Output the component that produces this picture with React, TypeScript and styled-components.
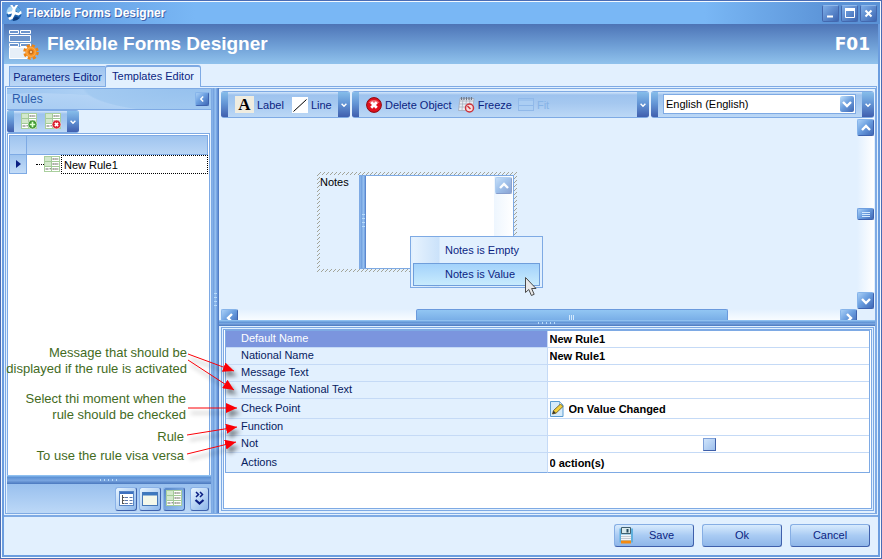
import React from "react";
import styled, { createGlobalStyle, css } from "styled-components";

const c = {
  bg: "#e2f0fe",
  line: "#7eaae4",
  soft: "#c5daf6",
  navy: "#0b1f82",
  ink: "#06205f",
  frame: "#4a6cb4",
  green: "#436b1e",
};

const glossy = "linear-gradient(135deg, #a9cff6 0%, #6b9fe0 45%, #3f68b6 100%)";
const barFill = "linear-gradient(#d3e6fb 0, #9ec3ee 3px, #a5c8f0 45%, #bcd8f6 100%)";
const capFill = "linear-gradient(#86bdea 0, #6496d6 45%, #405fae 100%)";
const splitH = "linear-gradient(#8fc0f0 0, #8fc0f0 1px, #5a90d4 2px, #79a5e0 60%, #4a78be 100%)";
const splitV = "linear-gradient(90deg, #8db8ec 0, #6c9cdc 2px, #a0c9f4 3px, #6f9edf 5px, #4a74be 100%)";

const GlobalStyle = createGlobalStyle`
  * { box-sizing: border-box; }
  body { margin: 0; background: ${c.bg}; }
  body, button, input, select, textarea {
    font-family: "Liberation Sans", Arial, sans-serif;
    font-size: 11px;
    color: ${c.navy};
  }
  button, input, select, textarea { margin: 0; padding: 0; border: 0; background: none; outline: none; border-radius: 0; }
  svg { display: block; flex: none; }
`;

const Frame = styled.div`
  display: flex;
  flex-direction: column;
  min-height: 100vh;
  border: 1px solid ${c.frame};
  box-shadow: inset 0 0 0 1px #f3f9ff;
  padding: 1px;
`;

const TitleBar = styled.header`
  display: flex;
  align-items: center;
  height: 22px;
  padding: 0 3px 0 4px;
  background: linear-gradient(90deg, #5c94da 0, #79b7f5 22%, #79b7f5 80%, #5a92d6 95%);
`;

const WindowTitle = styled.span`
  flex: 1;
  margin-left: 4px;
  font-size: 12px;
  font-weight: bold;
  color: #fff;
  text-shadow: 1px 1px 0 #3f62a8;
`;

const WindowButtons = styled.div`
  display: flex;
  gap: 2px;
`;

const WindowButton = styled.button`
  display: grid;
  place-items: center;
  width: 17px;
  height: 17px;
  border-radius: 2px;
  border: 1px solid #4468ae;
  border-top-color: #8fb8ea;
  background: linear-gradient(135deg, #7eaee8, #3c66b2);
`;

const Inner = styled.div`
  flex: 1;
  display: flex;
  flex-direction: column;
  border: solid #6b9ddf;
  border-width: 0 2px 2px;
  background: ${c.bg};
`;

const Banner = styled.div`
  display: flex;
  align-items: center;
  height: 40px;
  padding: 0 8px 0 4px;
  background: linear-gradient(#4d74b6, #6f9fd6 55%, #90c2ec);
  color: #fff;
`;

const BannerTitle = styled.h1`
  flex: 1;
  margin: 0 0 0 8px;
  font-size: 19px;
  font-weight: bold;
`;

const FormCode = styled.span`
  font: bold 17px "DejaVu Sans", Verdana, sans-serif;
`;

const Tabs = styled.div`
  display: flex;
  align-items: flex-end;
  height: 22px;
  padding-left: 5px;
`;

const Tab = styled.button<{ $active?: boolean }>`
  width: 96px;
  height: 20px;
  border: 1px solid ${c.line};
  border-right-width: 0;
  border-bottom: 0;
  white-space: nowrap;
  background: linear-gradient(#9dc3ef, #bcd7f6);
  ${(p) =>
    p.$active &&
    css`
      position: relative;
      z-index: 1;
      height: 22px;
      margin-bottom: -1px;
      padding-bottom: 2px;
      border-right-width: 1px;
      border-top-width: 2px;
      border-radius: 3px 3px 0 0;
      background: ${c.bg};
    `}
`;

const Workspace = styled.main`
  position: relative;
  flex: 1;
  display: flex;
  margin: 0 1px 1px;
  border: 1px solid ${c.line};
  padding: 1px 0 0 1px;
`;

const SidePanel = styled.section`
  display: flex;
  flex-direction: column;
  width: 205px;
  border: 1px solid ${c.line};
  border-width: 1px 1px 0 0;
`;

const SideHeader = styled.div`
  display: flex;
  align-items: center;
  justify-content: space-between;
  height: 21px;
  padding: 0 2px 0 5px;
  border-bottom: 1px solid ${c.line};
  background:
    radial-gradient(ellipse 110px 26px at 185px -2px, #96c1ee 0, #a3caf1 97%, transparent 100%),
    radial-gradient(ellipse 120px 20px at 30px 24px, #a6cbf2 0, #b3d3f5 97%, transparent 100%),
    linear-gradient(90deg, #9cc5f0, #c6e0fa);
  color: #2b5cab;
`;

const SideTitle = styled.h2`
  margin: 0;
  font-size: 12px;
  font-weight: normal;
`;

const SquareButton = styled.button<{ $size: number; $faded?: boolean }>`
  display: grid;
  place-items: center;
  width: ${(p) => p.$size}px;
  height: ${(p) => p.$size}px;
  border-radius: 2px;
  border: 1px solid #86b4ea;
  border-right-color: #3d62ae;
  border-bottom-color: #3d62ae;
  background: ${glossy};
  opacity: ${(p) => (p.$faded ? 0.6 : 1)};
`;

const ToolStrip = styled.div<{ $grow?: boolean; $width?: number; $height: number }>`
  display: flex;
  align-items: stretch;
  flex: ${(p) => (p.$grow ? "1" : "none")};
  width: ${(p) => (p.$width ? `${p.$width}px` : "auto")};
  height: ${(p) => p.$height}px;
  border: 1px solid ${c.line};
  border-width: 1px 0;
  border-radius: 3px;
  overflow: hidden;
  background: ${barFill};
`;

const StripGrip = styled.span`
  width: 7px;
  background: ${capFill};
`;

const StripItems = styled.div<{ $inset: number; $gap: number }>`
  flex: 1;
  display: flex;
  align-items: center;
  gap: ${(p) => p.$gap}px;
  padding-left: ${(p) => p.$inset}px;
`;

const StripMore = styled.button`
  display: grid;
  place-items: center;
  width: 12px;
  background: ${capFill};
`;

const ToolButton = styled.button`
  display: flex;
  align-items: center;
  gap: 3px;
  white-space: nowrap;
  &:disabled { color: #86b3e6; }
`;

const RuleGrid = styled.div`
  flex: 1;
  margin: 0 1px 0 0;
  border: 1px solid ${c.line};
  border-bottom: 0;
  padding: 1px;
  background: #fff;
`;

const RuleHead = styled.div`
  display: grid;
  grid-template-columns: 17px 1fr;
  height: 20px;
  border: 1px solid ${c.line};
  background: linear-gradient(#9fc4ef, #bad6f6);
`;

const HeadCell = styled.span`
  border-right: 1px solid ${c.line};
`;

const RuleRow = styled.div`
  display: grid;
  grid-template-columns: 18px 17px 17px 1fr;
  align-items: center;
  height: 19px;
`;

const RowMarker = styled.span`
  display: grid;
  place-items: center;
  height: 19px;
  border: 1px solid ${c.line};
  border-top: 0;
  background: linear-gradient(#9fc4ef, #c3dcf8);
`;

const TreeLine = styled.span`
  width: 8px;
  margin-left: 9px;
  border-top: 1px dotted #000;
`;

const RuleName = styled.input`
  width: 100%;
  height: 19px;
  padding-left: 2px;
  border: 1px dotted #000;
  color: #000;
`;

const SplitterH = styled.div<{ $height: number }>`
  display: flex;
  align-items: center;
  justify-content: center;
  height: ${(p) => p.$height}px;
  background: ${splitH};
`;

const SplitterV = styled.div<{ $width: number }>`
  display: flex;
  align-items: center;
  justify-content: center;
  flex: none;
  width: ${(p) => p.$width}px;
  background: ${splitV};
`;

const GripDots = styled.span<{ $vertical?: boolean }>`
  width: ${(p) => (p.$vertical ? "3px" : "18px")};
  height: ${(p) => (p.$vertical ? "16px" : "2px")};
  background: repeating-linear-gradient(
    ${(p) => (p.$vertical ? "180deg" : "90deg")},
    #b9dcfb 0, #b9dcfb 1px, transparent 1px, transparent 4px
  );
`;

const SideFooter = styled.div`
  display: flex;
  align-items: center;
  justify-content: flex-end;
  gap: 2px;
  height: 29px;
  padding-right: 2px;
  background: linear-gradient(#99c0ee, #bcd8f7);
`;

const ViewButton = styled.button<{ $pressed?: boolean; $narrow?: boolean }>`
  display: grid;
  place-items: center;
  width: ${(p) => (p.$narrow ? 19 : 22)}px;
  height: 24px;
  margin-left: ${(p) => (p.$narrow ? 3 : 0)}px;
  border-radius: 3px;
  border: 1px solid #8ab2e8;
  border-right-color: #3f62ac;
  border-bottom-color: #3f62ac;
  background: ${(p) =>
    p.$pressed ? "linear-gradient(135deg, #5585c8, #9cc6f2)" : "linear-gradient(135deg, #e8f5ff, #8cb6ea)"};
`;

const MainPanel = styled.section`
  flex: 1;
  min-width: 0;
  display: flex;
  flex-direction: column;
  border: solid ${c.line};
  border-width: 1px 1px 0 0;
`;

const Toolbars = styled.div`
  display: flex;
  gap: 2px;
  padding: 2px 1px 0 2px;
`;

const LanguageBox = styled.label`
  display: flex;
  align-items: center;
  flex: 1;
  height: 20px;
  margin: 2px 6px 2px 5px;
  padding-right: 1px;
  border: 1px solid ${c.line};
  background: #fff;
`;

const LanguageSelect = styled.select`
  flex: 1;
  height: 18px;
  padding-left: 2px;
  appearance: none;
  color: #000;
`;

const SelectArrow = styled.span`
  display: grid;
  place-items: center;
  width: 14px;
  height: 16px;
  border-radius: 2px;
  background: linear-gradient(135deg, #c0e0fb, #6a9cdc 50%, #3f66b2);
`;

const DesignArea = styled.div`
  display: grid;
  grid-template-columns: 1fr 17px;
  grid-template-rows: 191px 11px;
  padding: 0 1px 0 2px;
`;

const Canvas = styled.div`
  position: relative;
`;

const VScroll = styled.div`
  display: flex;
  flex-direction: column;
  align-items: center;
  justify-content: space-between;
  padding-top: 1px;
  background: linear-gradient(90deg, #e2f0fe, #fff);
`;

const VThumb = styled.span`
  display: grid;
  place-items: center;
  width: 17px;
  height: 12px;
  border: 1px solid #6f9fdf;
  border-right-color: #3d62ae;
  border-bottom-color: #3d62ae;
  border-radius: 2px;
  background: ${glossy};
`;

const HScroll = styled.div`
  display: grid;
  grid-template-columns: 17px 178fr 311fr 112fr 17px;
  overflow: hidden;
  background: linear-gradient(#e2f0fe, #f8fcff);
`;

const HThumb = styled.span`
  grid-column: 3;
  display: grid;
  place-items: center;
  border: 1px solid #6a9add;
  border-bottom: 0;
  border-radius: 2px 2px 0 0;
  background: linear-gradient(#92c6f3, #6a9fe0);
`;

const NotesField = styled.div`
  position: absolute;
  left: 96px;
  top: 54px;
  display: flex;
  width: 200px;
  height: 100px;
  padding: 3px;
  background: linear-gradient(135deg, transparent 38%, #a3a498 38%, #a3a498 62%, transparent 62%) 0 0 / 4px 4px ${c.bg};
`;

const NotesLabel = styled.label`
  flex: none;
  width: 39px;
  padding-top: 1px;
  line-height: 13px;
  color: #000;
  background: ${c.bg};
`;

const NotesBox = styled.div`
  flex: 1;
  min-width: 0;
  display: flex;
  border: 1px solid ${c.line};
  background: #fff;
`;

const NotesText = styled.textarea`
  flex: 1;
  min-width: 0;
  resize: none;
`;

const NotesScroll = styled.div`
  flex: none;
  width: 19px;
  padding: 1px;
  background: linear-gradient(90deg, #eef6fe, #fff);
`;

const ContextMenu = styled.div`
  position: absolute;
  left: 189px;
  top: 118px;
  width: 133px;
  padding: 1px 2px;
  border: 1px solid ${c.line};
  background: linear-gradient(90deg, ${c.bg} 2px, #e6f2fe 2px, #cbe2fa 28px, ${c.bg} 29px);
`;

const MenuItem = styled.button<{ $hot?: boolean }>`
  display: block;
  width: 100%;
  height: ${(p) => (p.$hot ? 23 : 25)}px;
  padding-left: ${(p) => (p.$hot ? 31 : 32)}px;
  padding-bottom: 1px;
  text-align: left;
  white-space: nowrap;
  ${(p) =>
    p.$hot &&
    css`
      border: 1px solid #6f9edb;
      background: linear-gradient(#a3d2fb, #c8ebfd);
    `}
`;

const Pointer = styled.svg`
  position: absolute;
  left: 303px;
  top: 158px;
`;

const PropertyPanel = styled.div`
  flex: 1;
  margin: 1px 1px 2px 2px;
  border: 1px solid ${c.line};
  padding: 1px;
  background: ${c.bg};
`;

const PropertySheet = styled.div`
  height: 100%;
  border: 1px solid ${c.line};
  padding: 0 1px;
  background: #fff;
`;

const PropertyTable = styled.table`
  width: 100%;
  border-collapse: separate;
  border-spacing: 0;
  table-layout: fixed;
  border: 1px solid ${c.line};
  border-bottom: 0;
`;

const PropertyRow = styled.tr<{ $tall?: boolean }>`
  height: ${(p) => (p.$tall ? 20 : 17)}px;
  &:last-child > * { border-bottom-color: ${c.line}; }
`;

const PropertyName = styled.th<{ $selected?: boolean }>`
  padding: 0 0 1px 15px;
  border: solid ${c.soft};
  border-width: 0 1px 1px 0;
  text-align: left;
  font-weight: normal;
  line-height: 13px;
  color: ${(p) => (p.$selected ? "#fff" : c.ink)};
  background: ${(p) => (p.$selected ? "#7b95de" : c.bg)};
`;

const PropertyCell = styled.td`
  padding: 0 0 0 2px;
  border-bottom: 1px solid ${c.soft};
  line-height: 13px;
`;

const CellContent = styled.div<{ $center?: boolean }>`
  display: flex;
  align-items: center;
  justify-content: ${(p) => (p.$center ? "center" : "flex-start")};
  gap: 5px;
`;

const PropertyInput = styled.input`
  flex: 1;
  min-width: 0;
  height: 14px;
  font-weight: bold;
  color: #000;
`;

const NotCheck = styled.input`
  appearance: none;
  width: 13px;
  height: 13px;
  border: 1px solid #7d9fd8;
  border-right-color: #3f5fa8;
  border-bottom-color: #3f5fa8;
  background: linear-gradient(135deg, #cfe4fb, #9dbfec);
`;

const Note = styled.p<{ $top: number; $right: number }>`
  position: absolute;
  left: 0;
  top: ${(p) => p.$top}px;
  width: ${(p) => p.$right}px;
  margin: 0;
  text-align: right;
  white-space: nowrap;
  font-size: 13px;
  line-height: 16px;
  color: ${c.green};
`;

const Arrows = styled.svg`
  position: absolute;
  left: 174px;
  top: 254px;
  pointer-events: none;
  filter: drop-shadow(3px 5px 2px rgba(0, 0, 0, 0.45));
`;

const Footer = styled.footer`
  display: flex;
  align-items: center;
  justify-content: flex-end;
  gap: 8px;
  height: 40px;
  padding: 0 8px 2px 0;
  border-top: 2px solid ${c.line};
`;

const FooterButton = styled.button`
  display: flex;
  align-items: center;
  width: 80px;
  height: 23px;
  padding: 0 4px;
  border: 1px solid #86aee4;
  border-right-color: #3f60ac;
  border-bottom-color: #3f60ac;
  border-radius: 3px;
  background: linear-gradient(#d8ebfd, #a9cbf3 50%, #8fb6e9);
`;

const ButtonText = styled.span`
  flex: 1;
  text-align: center;
`;

type Dir = "up" | "down" | "left" | "right";
const turns: Record<Dir, number> = { up: 180, down: 0, left: 90, right: 270 };

const Chevron = ({ dir, size = 9, color = "#fff" }: { dir: Dir; size?: number; color?: string }) => (
  <svg width={size} height={size} viewBox="0 0 10 10">
    <path d="M1 3l4 4 4-4" fill="none" stroke={color} strokeWidth="2.4" transform={`rotate(${turns[dir]} 5 5)`} />
  </svg>
);

const RuleIcon = ({ badge }: { badge?: "add" | "remove" }) => (
  <svg width="17" height="17" viewBox="0 0 17 17">
    <rect x=".5" y=".5" width="15" height="15" fill="#fff" stroke="#a9cf9d" />
    <path d="M1 1h6v4H1zM1 6h6v4H1z" fill="#d3e8cc" />
    <path d="M1 5.5h14M1 10.5h14M7.5 1v14" stroke="#a3ca98" fill="none" />
    <path d="M8.5 3h6M8.5 8h6M8.5 13h6" stroke="#a2a29c" strokeWidth="2" strokeDasharray="1.4 .5" />
    <path d="M1.5 13h3M5.5 12.8h1.5" stroke="#666" />
    {badge && <circle cx="11.5" cy="11.5" r="4.4" fill={badge === "add" ? "#3f9930" : "#dc2233"} stroke="#fff" strokeWidth=".5" />}
    {badge === "add" && <path d="M11.5 8.8v5.4M8.8 11.5h5.4" stroke="#dfffd0" strokeWidth="1.7" />}
    {badge === "remove" && <path d="M9.9 9.9l3.2 3.2M13.1 9.9l-3.2 3.2" stroke="#fff" strokeWidth="1.6" />}
  </svg>
);

const AppLogo = () => (
  <svg width="16" height="16" viewBox="0 0 16 16">
    <circle cx="8" cy="8.3" r="7.5" fill="#1c62ae" />
    <path d="M.5 9a8 8 0 0 1 4.500-8l2 4-2 3z" fill="#a9d8f6" />
    <path d="M9 1a8 8 0 0 1 6.500 6l-4 .500-2-2.500z" fill="#5aa3dc" />
    <path d="M4.200 0h2.200L8 2 9.800 0h2.400L9.600 4 9.500 6.800l3 1 2.500-2 .800 2.600-3.200 2-3.600-1L8 11.200l-1.600 3L3.600 15 2 12.800l3-1.400L6 8.600l-3.800.900-.7-2.200 4.300-1L6.500 4z" fill="#fff" />
    <path d="M7.500 13l2.500-1.500 3.500 1.500A8 8 0 0 1 7 15.700z" fill="#0c3a7c" />
  </svg>
);

const FormLogo = () => (
  <svg width="31" height="31" viewBox="0 0 31 31">
    <g fill="#6d95cc" stroke="#fff">
      <path d="M1.500 1.500h9v3h-9zM12.500 1.500h10v3h-10zM1.500 6.500h21v6h-21zM1.500 14.500h9v3h-9zM12.500 14.500h10v3h-10z" />
      <path d="M1.500 18.500h21v11h-21z" fill="#e6eff8" />
    </g>
    <g transform="translate(23 23)">
      <circle r="6.500" fill="none" stroke="#ee8413" strokeWidth="2.600" strokeDasharray="3 2.105" />
      <circle r="5.700" fill="#f58e1e" />
      <circle r="4.300" fill="none" stroke="#fbab4c" strokeWidth="1.200" />
      <circle r="1.900" fill="#f5c58c" stroke="#b85b08" />
    </g>
  </svg>
);

const LetterIcon = () => (
  <svg width="19" height="17" viewBox="0 0 19 17">
    <rect width="19" height="17" fill="#efece0" />
    <text x="9.500" y="14" textAnchor="middle" fontFamily="Liberation Serif" fontWeight="bold" fontSize="17" fill="#000">A</text>
  </svg>
);

const LineIcon = () => (
  <svg width="16" height="16" viewBox="0 0 16 16">
    <rect width="16" height="16" fill="#fff" />
    <path d="M1.500 14.500l13-12" stroke="#000" />
  </svg>
);

const DeleteIcon = () => (
  <svg width="16" height="16" viewBox="0 0 16 16">
    <circle cx="8" cy="8" r="7.400" fill="#e0101c" stroke="#8c0b12" />
    <path d="M2.500 6a6 5 0 0 1 11 0z" fill="#f0686c" />
    <path d="M5.200 5.200l5.600 5.600M10.800 5.200l-5.600 5.600" stroke="#fff" strokeWidth="2.800" />
  </svg>
);

const FreezeIcon = () => (
  <svg width="17" height="17" viewBox="0 0 17 17">
    <path d="M2 2.500h14l-1.500 12H.5z" fill="#e9edf3" stroke="#9ba4b3" strokeWidth=".7" />
    <path d="M2 5h13.500M1.500 8h13M1 11h13M5 3l-1 11M8.500 3l-1 11M12 3l-1 11" stroke="#a1aab9" strokeWidth=".7" />
    <path d="M3.500 1v3M6 1v3M8.500 1v3M11 1v3M13.500 1v3" stroke="#6d7584" strokeWidth="1.200" />
    <circle cx="11.500" cy="12" r="4" fill="#f8dede" stroke="#cb343d" strokeWidth="1.500" />
    <path d="M9.500 10l3 3" stroke="#cb343d" strokeWidth="1.500" />
  </svg>
);

const FitIcon = () => (
  <svg width="16" height="13" viewBox="0 0 16 13">
    <rect x=".5" y=".5" width="15" height="12" fill="#abcef3" stroke="#91b9e9" />
    <path d="M1 2h14M1 7.500h14" stroke="#8fb8e9" />
  </svg>
);

const ListIcon = () => (
  <svg width="15" height="15" viewBox="0 0 15 15">
    <rect x=".5" y=".5" width="14" height="14" fill="#fff" stroke="#5785c6" />
    <path d="M1 2h13" stroke="#3d70bf" strokeWidth="2" />
    <path d="M3.500 4v9M3.500 6.500h2M3.500 9.500h2M3.500 12.500h2" stroke="#555" fill="none" />
    <path d="M6 6.500h3M6 9.500h3M6 12.500h3M10.500 6.500h3M10.500 9.500h3M10.500 12.500h3" stroke="#5b77ac" />
  </svg>
);

const WindowIcon = () => (
  <svg width="16" height="14" viewBox="0 0 16 14">
    <rect x=".5" y=".5" width="15" height="13" fill="#f5f8ea" stroke="#4778b8" />
    <path d="M1 2h14" stroke="#3d78bf" strokeWidth="3" />
  </svg>
);

const MoreIcon = () => (
  <svg width="11" height="15" viewBox="0 0 11 15" fill="none" stroke="#0b1f82">
    <path d="M2 1l2.500 2.500L2 6M6 1l2.500 2.500L6 6" strokeWidth="1.500" />
    <path d="M1.500 9l4 3.500 4-3.500" strokeWidth="2.200" />
  </svg>
);

const EditIcon = () => (
  <svg width="14" height="16" viewBox="0 0 14 16">
    <path d="M.5.500h9l3.500 3.500v11.500H.5z" fill="#d6ebfa" stroke="#5a9bd0" />
    <path d="M9.500.500v3.500H13z" fill="#fff" stroke="#5a9bd0" strokeWidth=".7" />
    <path d="M2.500 13l1-3.500 7-6.500 2.500 2.500-7 6.700z" fill="#f2cf3c" stroke="#5c511f" strokeWidth=".8" />
    <path d="M2.500 13l1-3.500 2.300 2.500z" fill="#333" />
  </svg>
);

const SaveIcon = () => (
  <svg width="15" height="17" viewBox="0 0 15 17">
    <path d="M.5 1.500h13.500v14H.5z" fill="#5fb0de" />
    <path d="M2.500.500h9v6h-9z" fill="#d8e9ec" stroke="#41606e" />
    <path d="M8.500 2v3.500" stroke="#25495a" strokeWidth="2" />
    <path d="M2 7.500h10v6H2z" fill="#f3f5f7" />
    <path d="M2 9.500h10M2 11.500h10" stroke="#c3cad2" />
    <path d="M2 13.500h10v3H2z" fill="#f58a10" />
  </svg>
);

const arrowLines = [
  [4, 13, 50, 30],
  [4, 19, 50, 49],
  [4, 67, 53, 67],
  [3, 94, 53, 86],
  [3, 113, 52, 101],
];

const textRows = ["Default Name", "National Name", "Message Text", "Message National Text"];

export default function App() {
  return (
    <>
      <GlobalStyle />
      <Frame>
        <TitleBar>
          <AppLogo />
          <WindowTitle>Flexible Forms Designer</WindowTitle>
          <WindowButtons>
            <WindowButton aria-label="Minimize">
              <svg width="9" height="9"><path d="M1 7.500h6" stroke="#fff" strokeWidth="2" /></svg>
            </WindowButton>
            <WindowButton aria-label="Maximize">
              <svg width="10" height="10"><path d="M.5 1h9v8.500h-9z" stroke="#fff" fill="none" /><path d="M0 1.500h10" stroke="#fff" strokeWidth="3" /></svg>
            </WindowButton>
            <WindowButton aria-label="Close">
              <svg width="9" height="9"><path d="M1.500 1.500l6 6M7.500 1.500l-6 6" stroke="#fff" strokeWidth="2" /></svg>
            </WindowButton>
          </WindowButtons>
        </TitleBar>
        <Inner>
          <Banner>
            <FormLogo />
            <BannerTitle>Flexible Forms Designer</BannerTitle>
            <FormCode>F01</FormCode>
          </Banner>
          <Tabs role="tablist">
            <Tab role="tab">Parameters Editor</Tab>
            <Tab role="tab" $active aria-selected>Templates Editor</Tab>
          </Tabs>
          <Workspace>
            <SidePanel>
              <SideHeader>
                <SideTitle>Rules</SideTitle>
                <SquareButton $size={14} aria-label="Collapse rules"><Chevron dir="left" size={6} /></SquareButton>
              </SideHeader>
              <ToolStrip $width={72} $height={23}>
                <StripGrip />
                <StripItems $inset={7} $gap={7}>
                  <ToolButton aria-label="Add rule"><RuleIcon badge="add" /></ToolButton>
                  <ToolButton aria-label="Remove rule"><RuleIcon badge="remove" /></ToolButton>
                </StripItems>
                <StripMore aria-label="More rule tools"><Chevron dir="down" size={6} /></StripMore>
              </ToolStrip>
              <RuleGrid>
                <RuleHead><HeadCell /></RuleHead>
                <RuleRow>
                  <RowMarker><svg width="5" height="8"><path d="M0 0l5 4-5 4z" fill="#0b1f82" /></svg></RowMarker>
                  <TreeLine />
                  <RuleIcon />
                  <RuleName defaultValue="New Rule1" aria-label="Rule name" />
                </RuleRow>
              </RuleGrid>
              <SplitterH $height={9}><GripDots /></SplitterH>
              <SideFooter>
                <ViewButton aria-label="List view"><ListIcon /></ViewButton>
                <ViewButton aria-label="Form view"><WindowIcon /></ViewButton>
                <ViewButton $pressed aria-label="Rules view"><RuleIcon /></ViewButton>
                <ViewButton $narrow aria-label="More views"><MoreIcon /></ViewButton>
              </SideFooter>
            </SidePanel>
            <SplitterV $width={7}><GripDots $vertical /></SplitterV>
            <MainPanel>
              <Toolbars>
                <ToolStrip $width={129} $height={27}>
                  <StripGrip />
                  <StripItems $inset={7} $gap={8}>
                    <ToolButton><LetterIcon />Label</ToolButton>
                    <ToolButton><LineIcon />Line</ToolButton>
                  </StripItems>
                  <StripMore aria-label="More objects"><Chevron dir="down" size={6} /></StripMore>
                </ToolStrip>
                <ToolStrip $grow $height={27}>
                  <StripGrip />
                  <StripItems $inset={7} $gap={6}>
                    <ToolButton><DeleteIcon />Delete Object</ToolButton>
                    <ToolButton><FreezeIcon />Freeze</ToolButton>
                    <ToolButton disabled><FitIcon />Fit</ToolButton>
                  </StripItems>
                  <StripMore aria-label="More actions"><Chevron dir="down" size={6} /></StripMore>
                </ToolStrip>
                <ToolStrip $width={223} $height={27}>
                  <StripGrip />
                  <LanguageBox>
                    <LanguageSelect aria-label="Language"><option>English (English)</option></LanguageSelect>
                    <SelectArrow><Chevron dir="down" size={10} /></SelectArrow>
                  </LanguageBox>
                  <StripMore aria-label="More languages"><Chevron dir="down" size={6} /></StripMore>
                </ToolStrip>
              </Toolbars>
              <DesignArea>
                <Canvas>
                  <NotesField>
                    <NotesLabel htmlFor="notes">Notes</NotesLabel>
                    <NotesBox>
                      <SplitterV $width={6}><GripDots $vertical /></SplitterV>
                      <NotesText id="notes" />
                      <NotesScroll>
                        <SquareButton $size={17} $faded aria-label="Scroll notes up"><Chevron dir="up" size={10} /></SquareButton>
                      </NotesScroll>
                    </NotesBox>
                  </NotesField>
                  <ContextMenu role="menu">
                    <MenuItem role="menuitem">Notes is Empty</MenuItem>
                    <MenuItem role="menuitem" $hot>Notes is Value</MenuItem>
                  </ContextMenu>
                  <Pointer width="14" height="22" viewBox="0 0 14 22">
                    <path d="M1.500 1.500v15l3.300-3 2.600 6 2.800-1.200-2.600-5.800h4.400z" fill="#e9e9e9" stroke="#4a4a4a" />
                  </Pointer>
                </Canvas>
                <VScroll>
                  <SquareButton $size={17} aria-label="Scroll up"><Chevron dir="up" size={10} /></SquareButton>
                  <VThumb><svg width="8" height="5"><path d="M0 .5h8M0 2.500h8M0 4.500h8" stroke="#d3e9fd" /></svg></VThumb>
                  <SquareButton $size={17} aria-label="Scroll down"><Chevron dir="down" size={10} /></SquareButton>
                </VScroll>
                <HScroll>
                  <SquareButton $size={17} aria-label="Scroll left"><Chevron dir="left" size={10} /></SquareButton>
                  <span />
                  <HThumb><svg width="6" height="6"><path d="M.5 0v6M2.500 0v6M4.500 0v6" stroke="#d3e9fd" /></svg></HThumb>
                  <span />
                  <SquareButton $size={17} aria-label="Scroll right"><Chevron dir="right" size={10} /></SquareButton>
                </HScroll>
              </DesignArea>
              <SplitterH $height={6}><GripDots /></SplitterH>
              <PropertyPanel>
                <PropertySheet>
                  <PropertyTable>
                    <tbody>
                      {textRows.map((name, i) => (
                        <PropertyRow key={name}>
                          <PropertyName scope="row" $selected={i === 0}>{name}</PropertyName>
                          <PropertyCell>
                            <CellContent>
                              <PropertyInput aria-label={name} defaultValue={i < 2 ? "New Rule1" : ""} />
                            </CellContent>
                          </PropertyCell>
                        </PropertyRow>
                      ))}
                      <PropertyRow $tall>
                        <PropertyName scope="row">Check Point</PropertyName>
                        <PropertyCell>
                          <CellContent>
                            <EditIcon />
                            <PropertyInput aria-label="Check Point" defaultValue="On Value Changed" />
                          </CellContent>
                        </PropertyCell>
                      </PropertyRow>
                      <PropertyRow>
                        <PropertyName scope="row">Function</PropertyName>
                        <PropertyCell>
                          <CellContent><PropertyInput aria-label="Function" /></CellContent>
                        </PropertyCell>
                      </PropertyRow>
                      <PropertyRow>
                        <PropertyName scope="row">Not</PropertyName>
                        <PropertyCell>
                          <CellContent $center><NotCheck type="checkbox" aria-label="Not" /></CellContent>
                        </PropertyCell>
                      </PropertyRow>
                      <PropertyRow $tall>
                        <PropertyName scope="row">Actions</PropertyName>
                        <PropertyCell>
                          <CellContent><PropertyInput aria-label="Actions" defaultValue="0 action(s)" /></CellContent>
                        </PropertyCell>
                      </PropertyRow>
                    </tbody>
                  </PropertyTable>
                </PropertySheet>
              </PropertyPanel>
            </MainPanel>
            <Note $top={258} $right={181}>Message that should be<br />displayed if the rule is activated</Note>
            <Note $top={304} $right={180}>Select thi moment when the<br />rule should be checked</Note>
            <Note $top={342} $right={178}>Rule</Note>
            <Note $top={361} $right={178}>To use the rule visa versa</Note>
            <Arrows width="64" height="125" viewBox="-4 0 64 125">
              <defs>
                <marker id="head" markerUnits="userSpaceOnUse" markerWidth="12" markerHeight="10" refX="11" refY="5" orient="auto">
                  <path d="M0 0l11 5-11 5z" fill="#fb0007" />
                </marker>
              </defs>
              {arrowLines.map(([x1, y1, x2, y2]) => (
                <line key={y1} x1={x1} y1={y1} x2={x2} y2={y2} stroke="#fb0007" markerEnd="url(#head)" />
              ))}
            </Arrows>
          </Workspace>
          <Footer>
            <FooterButton><SaveIcon /><ButtonText>Save</ButtonText></FooterButton>
            <FooterButton><ButtonText>Ok</ButtonText></FooterButton>
            <FooterButton><ButtonText>Cancel</ButtonText></FooterButton>
          </Footer>
        </Inner>
      </Frame>
    </>
  );
}
